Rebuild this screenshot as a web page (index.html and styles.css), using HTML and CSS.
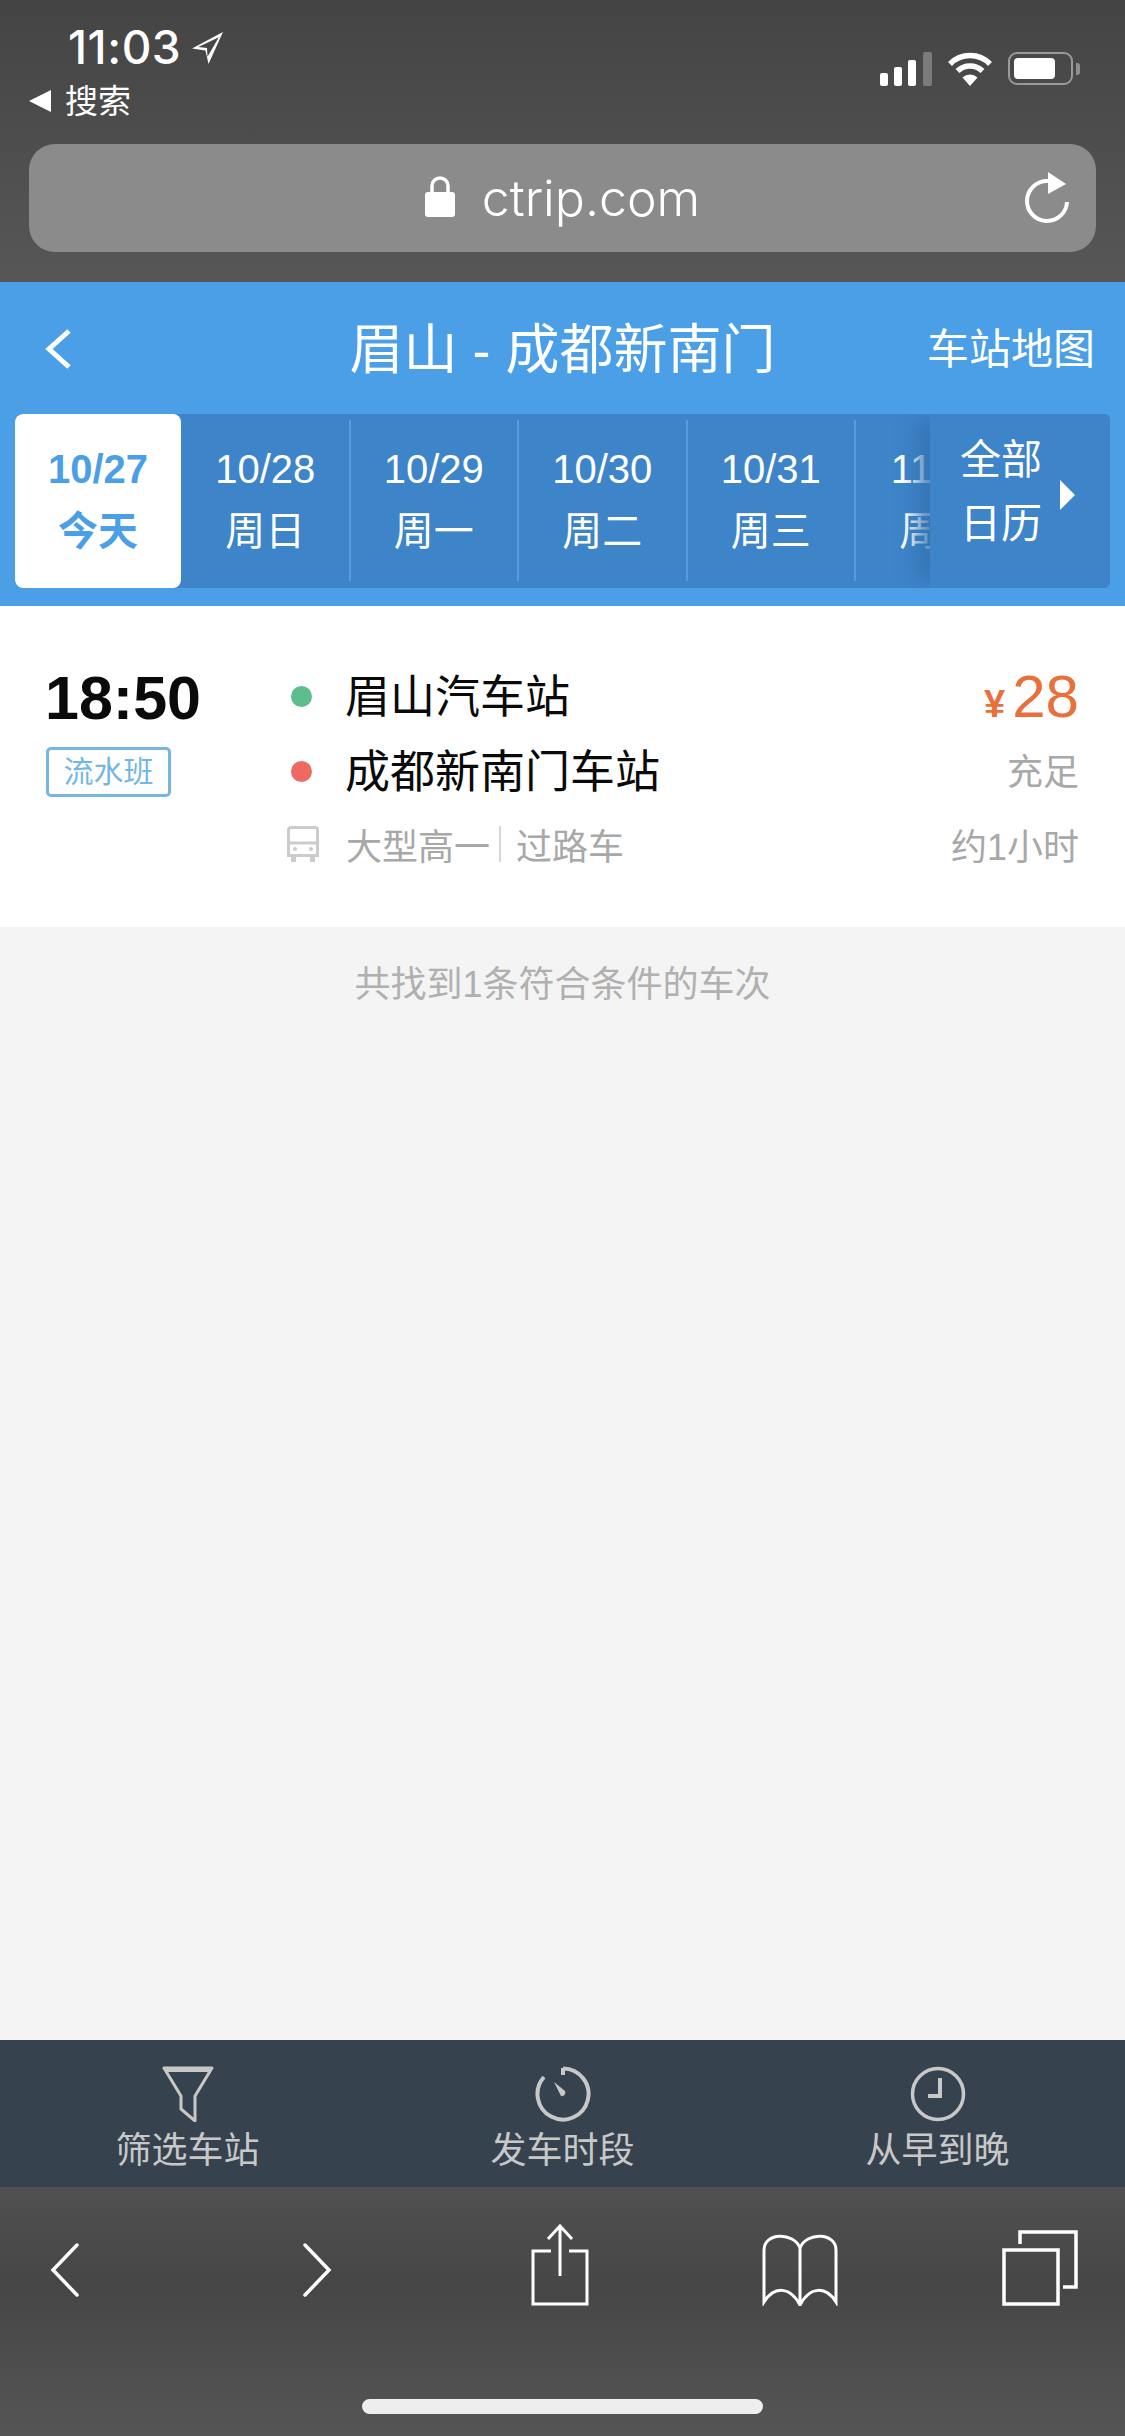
FILE: index.html
```html
<!DOCTYPE html>
<html lang="zh-CN">

<head>
  <meta charset="UTF-8">
  <title>眉山 - 成都新南门</title>
  <meta name="viewport" content="width=device-width, initial-scale=1.0">
  <link rel="stylesheet" href="styles.css">
</head>

<body>
  <div class="page">
    <div class="browser-top">
      <div class="status-row">
        <div class="status-left">
          <div class="clock">
            <span>11:03</span>
            <svg class="location" viewBox="0 0 32 32" width="33" height="33">
              <path d="M31 1 L1 17 L14 19 L17 32 Z M27 6 L16 25 L15.500 16.500 L7 15.500 Z" fill="#fff" fill-rule="evenodd" />
            </svg>
          </div>
          <div class="back-app"><span class="back-tri"></span><span>搜索</span></div>
        </div>
        <div class="status-right">
          <svg viewBox="0 0 52 34" width="52" height="34">
            <rect x="0" y="21" width="8" height="13" rx="2" fill="#fff" />
            <rect x="14" y="15" width="8" height="19" rx="2" fill="#fff" />
            <rect x="28" y="8" width="8" height="26" rx="2" fill="#fff" />
            <rect x="43" y="0" width="9" height="34" rx="2" fill="#7b7b7b" />
          </svg>
          <svg class="wifi" viewBox="0 0 46 34" width="46" height="34">
            <path d="M3 12 A28 28 0 0 1 43 12" fill="none" stroke="#fff" stroke-width="5.500" />
            <path d="M10.500 19 A18 18 0 0 1 35.500 19" fill="none" stroke="#fff" stroke-width="5.500" />
            <path d="M23 34 L15.500 25.500 A11 11 0 0 1 30.500 25.500 Z" fill="#fff" />
          </svg>
          <div class="battery">
            <div class="battery-body"><div class="battery-level"></div></div>
            <div class="battery-nub"></div>
          </div>
        </div>
      </div>
      <div class="url-bar">
        <svg class="lock" viewBox="0 0 30 42" width="30" height="42">
          <path d="M7 19 V11 A8 8 0 0 1 23 11 V19" fill="none" stroke="#fff" stroke-width="3.500" />
          <rect x="0" y="17" width="30" height="25" rx="3" fill="#fff" />
        </svg>
        <span class="url-text">ctrip.com</span>
        <svg class="reload" viewBox="0 0 46 52" width="46" height="52">
          <path d="M24 9 A20 20 0 1 0 43 30" fill="none" stroke="#fff" stroke-width="4" />
          <path d="M24 0 L42 12 L24 22 Z" fill="#fff" />
        </svg>
      </div>
    </div>

    <div class="header">
      <div class="title-row">
        <svg class="nav-back" viewBox="0 0 30 42" width="30" height="42">
          <path d="M26 3 L6 21 L26 39" fill="none" stroke="#fff" stroke-width="5" />
        </svg>
        <div class="title">眉山 - 成都新南门</div>
        <div class="map-link">车站地图</div>
      </div>
      <div class="date-strip">
        <div class="date-scroll">
          <div class="date-tab active"><div>10/27</div><div>今天</div></div>
          <div class="date-tab"><div>10/28</div><div>周日</div></div>
          <div class="date-tab"><div>10/29</div><div>周一</div></div>
          <div class="date-tab"><div>10/30</div><div>周二</div></div>
          <div class="date-tab"><div>10/31</div><div>周三</div></div>
          <div class="date-tab"><div>11/01</div><div>周四</div></div>
        </div>
        <div class="all-dates">
          <div class="all-dates-text"><div>全部</div><div>日历</div></div>
          <span class="all-dates-arrow"></span>
        </div>
      </div>
    </div>

    <div class="content">
      <div class="trip-card">
        <div class="trip-time">
          <div class="depart">18:50</div>
          <span class="trip-tag">流水班</span>
        </div>
        <div class="trip-info">
          <div class="trip-row"><span class="dot green"></span><span class="station">眉山汽车站</span></div>
          <div class="trip-row"><span class="dot red"></span><span class="station">成都新南门车站</span></div>
          <div class="trip-row meta">
            <svg class="bus" viewBox="0 0 32 36" width="32" height="36">
              <path d="M4 1.500 H28 A2.500 2.500 0 0 1 30.500 4 V29.500 H1.500 V4 A2.500 2.500 0 0 1 4 1.500 Z" fill="none" stroke="#ccc" stroke-width="3" />
              <path d="M1.500 17 H30.500" stroke="#ccc" stroke-width="3" />
              <circle cx="8" cy="23" r="2" fill="#ccc" />
              <circle cx="24" cy="23" r="2" fill="#ccc" />
              <path d="M4 29 V36 H9 V29 Z M23 29 V36 H28 V29 Z" fill="#ccc" />
            </svg>
            <span>大型高一</span><span class="meta-sep"></span><span>过路车</span>
          </div>
        </div>
        <div class="trip-side">
          <div class="trip-row price"><span class="yen">¥</span><span>28</span></div>
          <div class="trip-row meta">充足</div>
          <div class="trip-row meta">约1小时</div>
        </div>
      </div>
      <div class="summary">共找到1条符合条件的车次</div>
    </div>

    <div class="filter-bar">
      <div class="filter-item">
        <svg viewBox="0 0 52 56" width="52" height="56">
          <path d="M2 2 H50 L33 30 V55 L19 43 V30 Z" fill="none" stroke="#c8c8c8" stroke-width="3" stroke-linejoin="round" />
          <path d="M2 2 H50 L48 6 H4 Z" fill="#c8c8c8" />
        </svg>
        <span>筛选车站</span>
      </div>
      <div class="filter-item">
        <svg viewBox="0 0 56 56" width="56" height="56">
          <path d="M28 2.500 A25.500 25.500 0 1 1 9 11" fill="none" stroke="#c8c8c8" stroke-width="4" />
          <path d="M28 2 V9" stroke="#c8c8c8" stroke-width="4" />
          <path d="M19 16 L30 25 A3.500 3.500 0 0 1 26 30 Z" fill="#c8c8c8" />
        </svg>
        <span>发车时段</span>
      </div>
      <div class="filter-item">
        <svg viewBox="0 0 56 56" width="56" height="56">
          <circle cx="28" cy="28" r="25.500" fill="none" stroke="#c8c8c8" stroke-width="3.500" />
          <path d="M30 12 V30 H18" fill="none" stroke="#c8c8c8" stroke-width="4" />
        </svg>
        <span>从早到晚</span>
      </div>
    </div>

    <div class="browser-bottom">
      <div class="toolbar">
        <svg class="tool-back" viewBox="0 0 30 54" width="30" height="54">
          <path d="M27 2 L3 27 L27 52" fill="none" stroke="#fff" stroke-width="3.500" stroke-linecap="round" />
        </svg>
        <svg class="tool-forward" viewBox="0 0 30 54" width="30" height="54">
          <path d="M3 2 L27 27 L3 52" fill="none" stroke="#fff" stroke-width="3.500" stroke-linecap="round" />
        </svg>
        <svg class="tool-share" viewBox="0 0 58 82" width="58" height="82">
          <path d="M20 27 H2 V80 H56 V27 H38" fill="none" stroke="#fff" stroke-width="3" />
          <path d="M29 52 V2 M17 15 L29 2 L41 15" fill="none" stroke="#fff" stroke-width="3" />
        </svg>
        <svg class="tool-book" viewBox="0 0 76 72" width="76" height="72">
          <path d="M38 14 C32 -2 2 -2 2 16 V68 C12 52 28 52 38 71 C48 52 64 52 74 68 V16 C74 -2 44 -2 38 14 V71" fill="none" stroke="#fff" stroke-width="3" />
        </svg>
        <svg class="tool-tabs" viewBox="0 0 76 76" width="76" height="76">
          <rect x="2" y="20" width="54" height="54" fill="none" stroke="#fff" stroke-width="3.500" />
          <path d="M18 14 V2 H74 V57 H61" fill="none" stroke="#fff" stroke-width="3.500" />
        </svg>
      </div>
      <div class="home-indicator"></div>
    </div>
  </div>
</body>

</html>
```

FILE: styles.css
```css
* {
  box-sizing: border-box;
}

body {
  margin: 0;
  padding: 0;
  background: #f4f4f4;
  font-family: 'Liberation Sans', 'Noto Sans CJK SC', sans-serif;
}

.page {
  width: 1125px;
  height: 2436px;
  display: flex;
  flex-direction: column;
  overflow: hidden;
}

/* browser chrome, top */
.browser-top {
  height: 282px;
  padding: 0 29px;
  background: linear-gradient(#444444, #575757);
  color: white;
}

.status-row {
  height: 144px;
  display: flex;
  justify-content: space-between;
}

.status-left {
  padding-top: 24px;
}

.clock {
  height: 46px;
  padding-left: 39px;
  display: flex;
  align-items: center;
  gap: 10px;
  font-family: Inter, sans-serif;
  font-size: 46px;
  font-weight: 500;
  letter-spacing: 0.5px;
}

.back-app {
  height: 40px;
  margin-top: 9px;
  display: flex;
  align-items: center;
  gap: 14px;
  font-size: 33px;
}

.back-tri {
  width: 0;
  height: 0;
  margin-top: 3px;
  border-top: 11px solid transparent;
  border-bottom: 11px solid transparent;
  border-right: 22px solid white;
}

.status-right {
  padding-top: 52px;
  padding-right: 0;
  display: flex;
  align-items: flex-start;
  gap: 15px;
}

.battery {
  display: flex;
  align-items: center;
  gap: 3px;
  margin-right: 16px;
}

.battery-body {
  width: 65px;
  height: 33px;
  padding: 4px;
  border: 2px solid #9a9a9a;
  border-radius: 9px;
}

.battery-level {
  width: 41px;
  height: 100%;
  background: white;
  border-radius: 4px;
}

.battery-nub {
  width: 4px;
  height: 12px;
  background: #8f8f8f;
  border-radius: 0 3px 3px 0;
}

.url-bar {
  height: 108px;
  position: relative;
  display: flex;
  justify-content: center;
  align-items: center;
  gap: 27px;
  background: #8b8b8b;
  border-radius: 26px;
}

.lock {
  margin-top: -4px;
}

.url-text {
  font-family: Inter, sans-serif;
  font-size: 50px;
  font-weight: 300;
}

.reload {
  position: absolute;
  right: 26px;
  top: 28px;
}

/* blue header */
.header {
  height: 324px;
  background: #4a9fe6;
  color: white;
  padding: 0 15px;
}

.title-row {
  height: 132px;
  padding: 0 15px 5px 15px;
  display: grid;
  grid-template-columns: 1fr auto 1fr;
  align-items: center;
}

.nav-back {
  margin: 7px 0 0 13px;
}

.title {
  font-size: 54px;
}

.map-link {
  font-size: 42px;
  text-align: right;
  white-space: nowrap;
}

.date-strip {
  height: 174px;
  display: flex;
  background: #3d84c9;
  border-radius: 6px;
  overflow: hidden;
}

.date-scroll {
  flex: 1;
  min-width: 0;
  display: flex;
  overflow: hidden;
}

.date-tab {
  flex: 0 0 168.500px;
  margin: 6px 0 7px;
  padding-top: 18px;
  border-right: 2px solid #5a9cdb;
  font-size: 40px;
  line-height: 62px;
  text-align: center;
}

.date-tab.active {
  flex-basis: 166px;
  margin: 0 1px 0 0;
  padding-top: 24px;
  border-right: none;
  border-radius: 8px;
  background: white;
  color: #4a9fe6;
  font-weight: bold;
}

.all-dates {
  flex: 0 0 180px;
  position: relative;
  padding-left: 30px;
  display: flex;
  align-items: center;
  background: #3d84c9;
  box-shadow: -22px 0 16px -8px rgba(52, 115, 178, 0.8);
}

.all-dates-text {
  padding-bottom: 18px;
  font-size: 41px;
  line-height: 64px;
}

.all-dates-arrow {
  margin: 0 0 12px 18px;
  border-top: 15px solid transparent;
  border-bottom: 15px solid transparent;
  border-left: 15px solid white;
}

/* result list */
.content {
  flex: 1;
}

.trip-card {
  height: 321px;
  padding: 50px 46px 0 45px;
  display: flex;
  background: white;
}

.trip-time {
  width: 242px;
  padding-top: 3px;
}

.depart {
  font-size: 61px;
  font-weight: bold;
  line-height: 78px;
  color: #0a0a0a;
}

.trip-tag {
  display: inline-block;
  width: 125px;
  height: 50px;
  margin-top: 10px;
  margin-left: 1px;
  border: 3px solid #74b7e3;
  border-radius: 5px;
  font-size: 30px;
  line-height: 44px;
  text-align: center;
  color: #74b7e3;
}

.trip-info {
  flex: 1;
}

.trip-row {
  height: 75px;
  display: flex;
  align-items: center;
}

.dot {
  width: 21px;
  height: 21px;
  margin: 6px 33px 0 4px;
  border-radius: 50%;
}

.dot.green {
  background: #5dbd8d;
}

.dot.red {
  background: #ed6a60;
}

.station {
  font-size: 45px;
  color: #0a0a0a;
}

.meta {
  font-size: 36px;
  color: #a8a8a8;
}

.bus {
  margin-right: 27px;
}

.meta-sep {
  width: 2px;
  height: 36px;
  margin: 0 15px 0 9px;
  background: #d8d8d8;
}

.trip-side .trip-row {
  justify-content: flex-end;
}

.price {
  align-items: baseline;
  padding-top: 6px;
  font-size: 60px;
  color: #e8703a;
}

.yen {
  margin-right: 7px;
  font-size: 38px;
  font-weight: bold;
}

.summary {
  padding-top: 34px;
  font-size: 36px;
  line-height: 48px;
  text-align: center;
  color: #b0b0b0;
}

/* bottom filter tabs */
.filter-bar {
  height: 147px;
  padding-top: 26px;
  display: grid;
  grid-template-columns: repeat(3, 1fr);
  background: #37424f;
  color: #c8c8c8;
}

.filter-item {
  display: flex;
  flex-direction: column;
  align-items: center;
  font-size: 36px;
  line-height: 50px;
}

.filter-item span {
  margin-top: 4px;
}

/* browser chrome, bottom */
.browser-bottom {
  height: 249px;
  position: relative;
  background: linear-gradient(#505050, #464646 40%, #555555);
}

.toolbar {
  height: 118px;
  padding: 37px 0 0 50px;
  display: flex;
}

.tool-back {
  margin-top: 19px;
}

.tool-forward {
  margin: 19px 0 0 222px;
}

.tool-share {
  margin-left: 199px;
}

.tool-book {
  margin: 10px 0 0 173px;
}

.tool-tabs {
  margin: 6px 0 0 164px;
}

.home-indicator {
  position: absolute;
  left: 362px;
  bottom: 22px;
  width: 401px;
  height: 15px;
  background: #eeeeee;
  border-radius: 8px;
}
```
